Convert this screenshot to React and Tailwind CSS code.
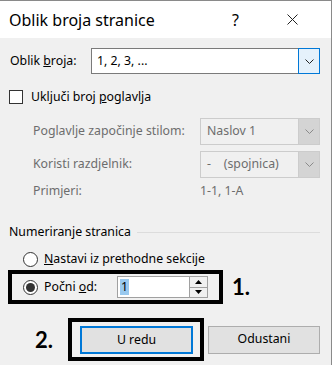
import React from 'react';

const Chevron = ({ color = '#333' }) => (
    <svg width="9" height="5" viewBox="0 0 9 5" fill="none">
        <path d="M0.5 0.5L4.5 4.5L8.5 0.5" stroke={color} strokeWidth="1" />
    </svg>
);

const Radio = ({ checked }) => (
    <span className="w-[15px] h-[15px] rounded-full border border-[#333] bg-white flex items-center justify-center shrink-0">
        {checked && <span className="w-[9px] h-[9px] rounded-full bg-[#333]" />}
    </span>
);

const DisabledSelect = ({ children }) => (
    <div className="w-[120px] h-[27px] border border-[#cccccc] bg-[#f0f0f0] flex">
        <div className="flex-1 flex items-center pl-[6px] text-[#6d6d6d] whitespace-pre">{children}</div>
        <div className="w-[21px] bg-[#d4d4d4] border-l border-[#cccccc] flex items-center justify-center">
            <Chevron color="#8a8a8a" />
        </div>
    </div>
);

export default function App() {
    return (
        <div className="w-[332px] h-[365px] bg-[#f0f0f0] border-t border-r border-[#8a8a8a] text-[12.3px] text-black overflow-hidden" style={{ fontFamily: '"Noto Sans", sans-serif' }}>
            {/* Title bar */}
            <div className="h-[37px] bg-white flex items-center">
                <span className="pl-[9px] text-[16px] w-[232px]">Oblik broja stranice</span>
                <span className="text-[16px] w-[55px]">?</span>
                <svg width="11" height="11" viewBox="0 0 11 11">
                    <path d="M0.5 0.5L10.5 10.5M10.5 0.5L0.5 10.5" stroke="#222" strokeWidth="1" />
                </svg>
            </div>

            {/* Oblik broja */}
            <div className="mt-[10px] h-[26px] flex items-center">
                <span className="pl-[10px] w-[91px]">Oblik <u>b</u>roja:</span>
                <div className="w-[229px] h-[26px] border border-[#7a7a7a] bg-white flex">
                    <div className="flex-1 flex items-center pl-[5px]">1, 2, 3, ...</div>
                    <div className="w-[22px] -my-px -mr-px bg-[#e5f1fb] border border-[#0078d7] flex items-center justify-center">
                        <Chevron color="#222" />
                    </div>
                </div>
            </div>

            {/* Uključi broj poglavlja */}
            <div className="mt-[16px] h-[14px] flex items-center pl-[9px]">
                <span className="w-[14px] h-[14px] border border-[#333] bg-white" />
                <span className="ml-[8px]">Uključi broj <u>p</u>oglavlja</span>
            </div>

            <div className="mt-[14px] h-[27px] flex items-center text-[#6d6d6d]">
                <span className="pl-[33px] w-[200px]">Poglavlje započinje stilom:</span>
                <DisabledSelect>Naslov 1</DisabledSelect>
            </div>

            <div className="mt-[6px] h-[27px] flex items-center text-[#6d6d6d]">
                <span className="pl-[33px] w-[200px]">Koristi razdjelnik:</span>
                <DisabledSelect>{'-    (spojnica)'}</DisabledSelect>
            </div>

            <div className="mt-[5px] h-[16px] flex items-center text-[#6d6d6d]">
                <span className="pl-[33px] w-[200px]">Primjeri:</span>
                <span>1-1, 1-A</span>
            </div>

            {/* Numeriranje stranica */}
            <div className="mt-[25px] h-[16px] flex items-center pl-[9px]">
                <span>Numeriranje stranica</span>
                <span className="flex-1 h-px bg-[#dcdcdc] ml-[6px] mr-[11px]" />
            </div>

            <div className="mt-[11px] h-[16px] flex items-center pl-[23px]">
                <Radio />
                <span className="ml-[6px]"><u>N</u>astavi iz prethodne sekcije</span>
            </div>

            <div className="mt-[3px] flex items-center pl-[8px]">
                <div className="w-[215px] h-[34px] border-4 border-black flex items-center">
                    <span className="ml-[11px]"><Radio checked /></span>
                    <span className="ml-[6px] w-[73px]">Počni <u>o</u>d:</span>
                    <div className="w-[91px] h-[22px] border border-[#a0a0a0] bg-white flex">
                        <div className="flex-1 flex items-center pl-[2px]">
                            <span className="bg-[#99c9ef] px-[1px] leading-[16px]">1</span>
                        </div>
                        <div className="w-[18px] flex flex-col">
                            <div className="flex-1 bg-[#f0f0f0] border border-[#a0a0a0] -mt-px -mr-px flex items-center justify-center">
                                <svg width="7" height="4" viewBox="0 0 7 4"><path d="M0 4L3.5 0L7 4Z" fill="#000" /></svg>
                            </div>
                            <div className="flex-1 bg-[#f0f0f0] border border-[#a0a0a0] -mt-px -mr-px -mb-px flex items-center justify-center">
                                <svg width="7" height="4" viewBox="0 0 7 4"><path d="M0 0L3.5 4L7 0Z" fill="#000" /></svg>
                            </div>
                        </div>
                    </div>
                </div>
                <span className="ml-[9px] text-[22px] font-bold leading-none" style={{ fontFamily: 'Lato, sans-serif' }}>1.</span>
            </div>

            {/* Buttons */}
            <div className="mt-[14px] flex items-center pl-[35px]">
                <span className="w-[33px] text-[22px] font-bold leading-none" style={{ fontFamily: 'Lato, sans-serif' }}>2.</span>
                <div className="w-[136px] h-[43px] border-4 border-black pl-[8px] pt-[4px]">
                    <button className="w-[113px] h-[28px] bg-[#e1e1e1] border-2 border-[#0078d7] flex items-center justify-center">U redu</button>
                </div>
                <button className="ml-[4px] w-[112px] h-[28px] bg-[#e1e1e1] border border-[#adadad] flex items-center justify-center">Odustani</button>
            </div>
        </div>
    );
}
